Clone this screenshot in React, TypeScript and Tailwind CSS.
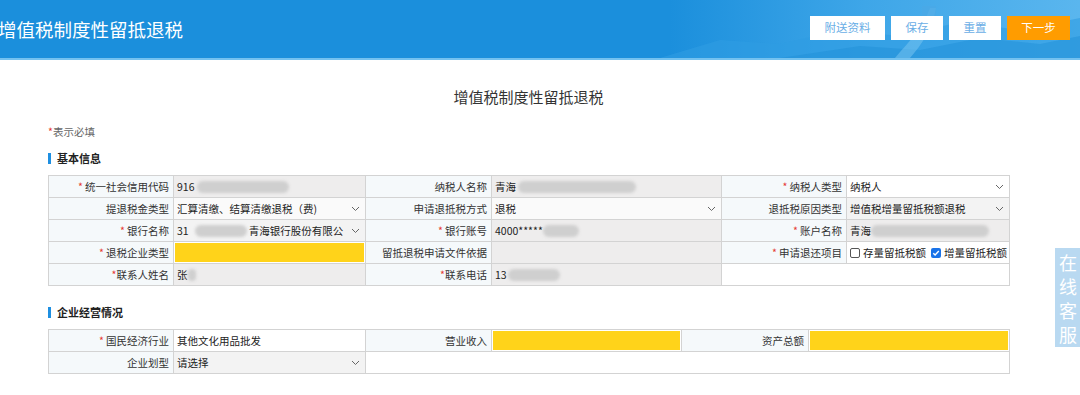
import React from 'react';

const FONT = { fontFamily: '"Microsoft YaHei", "Noto Sans CJK SC", "Noto Sans", sans-serif' };

function Req() {
  return <span className="text-[#e53935] mr-[2px]">*</span>;
}

function Blur({ w, ml = 0 }: { w: number; ml?: number }) {
  return (
    <span
      className="inline-block h-[12px] rounded-full bg-[#cfcfcf] blur-[1.5px] align-middle"
      style={{ width: w, marginLeft: ml }}
    />
  );
}

function Chevron() {
  return (
    <svg width="9" height="6" viewBox="0 0 9 6" className="absolute right-[5px] top-1/2 -translate-y-1/2">
      <path d="M1 1l3.5 3.5L8 1" fill="none" stroke="#666" strokeWidth="1" />
    </svg>
  );
}

function Label({ children, req }: { children: React.ReactNode; req?: boolean }) {
  return (
    <td className="border border-[#d3d3d3] bg-[#f5f9fb] text-right pr-[4px] text-[#333] whitespace-nowrap">
      {req && <Req />}
      {children}
    </td>
  );
}

function Value({
  children,
  bg = 'bg-[#eeeded]',
  select,
  colSpan,
}: {
  children?: React.ReactNode;
  bg?: string;
  select?: boolean;
  colSpan?: number;
}) {
  return (
    <td colSpan={colSpan} className={`border border-[#d3d3d3] ${bg} p-0`}>
      <div className="relative h-[21px] flex items-center pl-[3px] text-[#222] whitespace-nowrap overflow-hidden">
        {children}
        {select && <Chevron />}
      </div>
    </td>
  );
}

function Yellow() {
  return (
    <td className="border border-[#d3d3d3] bg-white p-[1px]">
      <div className="h-[19px] bg-[#ffd31a]" />
    </td>
  );
}

function Check({ checked }: { checked?: boolean }) {
  return checked ? (
    <span className="inline-flex w-[10px] h-[10px] rounded-[2px] bg-[#1a73e8] items-center justify-center mr-[3px]">
      <svg width="8" height="8" viewBox="0 0 8 8">
        <path d="M1.3 4.2l1.8 1.8L6.8 2" fill="none" stroke="#fff" strokeWidth="1.4" />
      </svg>
    </span>
  ) : (
    <span className="inline-block w-[10px] h-[10px] rounded-[2px] border border-[#555] bg-white mr-[3px]" />
  );
}

function SectionTitle({ children }: { children: React.ReactNode }) {
  return (
    <div className="flex items-center h-[14px]">
      <span className="w-[3px] h-[11px] bg-[#1e8fe1] mr-[6px]" />
      <span className="text-[11px] font-bold text-[#222]">{children}</span>
    </div>
  );
}

export default function App() {
  return (
    <div className="w-[1080px] h-[395px] bg-white overflow-hidden relative" style={FONT}>
      {/* Header */}
      <header className="relative h-[60px] border-b-2 border-[#74c2f0] bg-[linear-gradient(90deg,#1b8fdc_0%,#1b8fdc_62%,#3ea6e8_80%,#5ab6ee_100%)] overflow-hidden flex items-center justify-between">
        <svg className="absolute right-0 top-0" width="420" height="58" viewBox="0 0 420 58" preserveAspectRatio="none">
          <path d="M0 58 L60 40 L120 44 L180 30 L240 36 L300 22 L360 30 L420 18 L420 58 Z" fill="#2f9de3" opacity="0.6" />
          <path d="M120 58 L200 46 L260 50 L320 38 L380 44 L420 36 L420 58 Z" fill="#1f8fd8" opacity="0.5" />
          <path d="M235 58 C250 40 262 30 270 8 L276 8 C272 30 262 44 250 58 Z" fill="#7ec8f2" opacity="0.5" />
          <rect x="262" y="6" width="14" height="10" fill="#4aa8e6" opacity="0.7" />
        </svg>
        <h1 className="relative -ml-[2px] text-white text-[18.5px] leading-none">增值税制度性留抵退税</h1>
        <div className="relative flex gap-[6px] mr-[10px] -mt-[2px]">
          <button className="w-[75px] h-[24px] bg-white text-[#6aaee6] text-[11.5px]">附送资料</button>
          <button className="w-[52px] h-[24px] bg-white text-[#6aaee6] text-[11.5px]">保存</button>
          <button className="w-[52px] h-[24px] bg-white text-[#6aaee6] text-[11.5px]">重置</button>
          <button className="w-[63px] h-[24px] bg-[#ff9c00] text-white text-[11.5px]">下一步</button>
        </div>
      </header>

      <main className="pt-[27px] pl-[48px] w-[1009px]">
        <div className="text-center text-[15px] leading-[20px] text-[#333]">增值税制度性留抵退税</div>

        <div className="mt-[18px] text-[10.5px] leading-[14px] text-[#666]">
          <span className="text-[#e53935]">*</span>表示必填
        </div>

        <div className="mt-[12px]">
          <SectionTitle>基本信息</SectionTitle>
        </div>

        <table className="mt-[10px] w-[961px] border-collapse table-fixed text-[10.5px]">
          <colgroup>
            <col style={{ width: 125 }} />
            <col style={{ width: 192 }} />
            <col style={{ width: 126 }} />
            <col style={{ width: 230 }} />
            <col style={{ width: 125 }} />
            <col style={{ width: 163 }} />
          </colgroup>
          <tbody>
            <tr>
              <Label req>统一社会信用代码</Label>
              <Value>
                916
                <Blur w={92} ml={3} />
              </Value>
              <Label>纳税人名称</Label>
              <Value>
                青海
                <Blur w={118} ml={2} />
              </Value>
              <Label req>纳税人类型</Label>
              <Value bg="bg-white" select>
                纳税人
              </Value>
            </tr>
            <tr>
              <Label>提退税金类型</Label>
              <Value bg="bg-[#fafafa]" select>
                汇算清缴、结算清缴退税（费)
              </Value>
              <Label>申请退抵税方式</Label>
              <Value bg="bg-[#fafafa]" select>
                退税
              </Value>
              <Label>退抵税原因类型</Label>
              <Value bg="bg-[#f3f3f3]" select>
                增值税增量留抵税额退税
              </Value>
            </tr>
            <tr>
              <Label req>银行名称</Label>
              <Value bg="bg-[#f3f3f3]" select>
                31
                <Blur w={52} ml={6} />
                <span className="ml-[2px]">青海银行股份有限公</span>
              </Value>
              <Label req>银行账号</Label>
              <Value>
                4000*****
                <Blur w={36} ml={0} />
              </Value>
              <Label req>账户名称</Label>
              <Value>
                青海
                <Blur w={118} ml={0} />
              </Value>
            </tr>
            <tr>
              <Label req>退税企业类型</Label>
              <Yellow />
              <Label>留抵退税申请文件依据</Label>
              <Value />
              <Label req>申请退还项目</Label>
              <Value bg="bg-white">
                <Check />
                <span className="mr-[5px]">存量留抵税额</span>
                <Check checked />
                <span>增量留抵税额</span>
              </Value>
            </tr>
            <tr>
              <Label>
                <span className="text-[#e53935]">*</span>联系人姓名
              </Label>
              <Value>
                张<Blur w={8} ml={0} />
              </Value>
              <Label>
                <span className="text-[#e53935]">*</span>联系电话
              </Label>
              <Value>
                13
                <Blur w={52} ml={1} />
              </Value>
              <Value bg="bg-white" colSpan={2} />
            </tr>
          </tbody>
        </table>

        <div className="mt-[19px]">
          <SectionTitle>企业经营情况</SectionTitle>
        </div>

        <table className="mt-[10px] w-[961px] border-collapse table-fixed text-[10.5px]">
          <colgroup>
            <col style={{ width: 125 }} />
            <col style={{ width: 192 }} />
            <col style={{ width: 126 }} />
            <col style={{ width: 190 }} />
            <col style={{ width: 127 }} />
            <col style={{ width: 201 }} />
          </colgroup>
          <tbody>
            <tr>
              <Label req>国民经济行业</Label>
              <Value bg="bg-white">其他文化用品批发</Value>
              <Label>营业收入</Label>
              <Yellow />
              <Label>资产总额</Label>
              <Yellow />
            </tr>
            <tr>
              <Label>企业划型</Label>
              <Value bg="bg-[#f3f3f3]" select>
                请选择
              </Value>
              <Value bg="bg-white" colSpan={4} />
            </tr>
          </tbody>
        </table>
      </main>

      {/* Online service float */}
      <div className="absolute left-[1055px] top-[248px] w-[26px] h-[99px] bg-[#b9d9f1] flex flex-col items-center justify-center text-white text-[18px]">
        <span className="block h-[24px] leading-[24px]">在</span>
        <span className="block h-[24px] leading-[24px]">线</span>
        <span className="block h-[24px] leading-[24px]">客</span>
        <span className="block h-[24px] leading-[24px]">服</span>
      </div>
    </div>
  );
}
